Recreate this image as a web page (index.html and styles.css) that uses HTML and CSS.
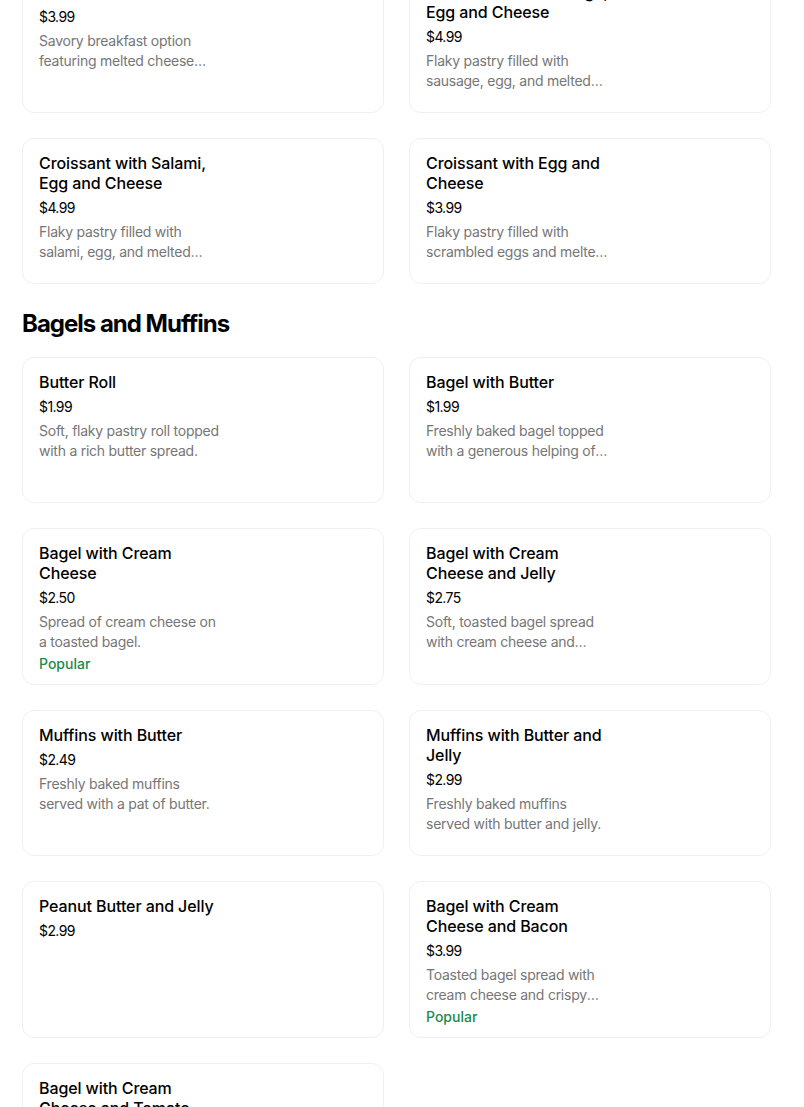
FILE: index.html
```html
<!DOCTYPE html>
<html lang="en">
<head>
<meta charset="utf-8">
<title>Menu</title>
<link rel="stylesheet" href="styles.css">
</head>
<body>
<main class="menu">
  <section class="section">
    <div class="grid">
      <article class="card">
        <div class="info">
          <h3 class="title">Cheese Croissant</h3>
          <div class="price">$3.99</div>
          <p class="desc">Savory breakfast option featuring melted cheese inside a buttery croissant.</p>
        </div>
      </article>
      <article class="card">
        <div class="info">
          <h3 class="title">Croissant with Sausage, Egg and Cheese</h3>
          <div class="price">$4.99</div>
          <p class="desc">Flaky pastry filled with sausage, egg, and melted cheese.</p>
        </div>
      </article>
      <article class="card">
        <div class="info">
          <h3 class="title">Croissant with Salami, Egg and Cheese</h3>
          <div class="price">$4.99</div>
          <p class="desc">Flaky pastry filled with salami, egg, and melted cheese.</p>
        </div>
      </article>
      <article class="card">
        <div class="info">
          <h3 class="title">Croissant with Egg and Cheese</h3>
          <div class="price">$3.99</div>
          <p class="desc">Flaky pastry filled with scrambled eggs and melted cheese.</p>
        </div>
      </article>
    </div>
  </section>

  <section class="section">
    <h2 class="section-title">Bagels and Muffins</h2>
    <div class="grid">
      <article class="card">
        <div class="info">
          <h3 class="title">Butter Roll</h3>
          <div class="price">$1.99</div>
          <p class="desc">Soft, flaky pastry roll topped with a rich butter spread.</p>
        </div>
      </article>
      <article class="card">
        <div class="info">
          <h3 class="title">Bagel with Butter</h3>
          <div class="price">$1.99</div>
          <p class="desc">Freshly baked bagel topped with a generous helping of butter.</p>
        </div>
      </article>
      <article class="card">
        <div class="info">
          <h3 class="title">Bagel with Cream Cheese</h3>
          <div class="price">$2.50</div>
          <p class="desc">Spread of cream cheese on a toasted bagel.</p>
          <div class="badge">Popular</div>
        </div>
      </article>
      <article class="card">
        <div class="info">
          <h3 class="title">Bagel with Cream Cheese and Jelly</h3>
          <div class="price">$2.75</div>
          <p class="desc">Soft, toasted bagel spread with cream cheese and sweet jelly.</p>
        </div>
      </article>
      <article class="card">
        <div class="info">
          <h3 class="title">Muffins with Butter</h3>
          <div class="price">$2.49</div>
          <p class="desc">Freshly baked muffins served with a pat of butter.</p>
        </div>
      </article>
      <article class="card">
        <div class="info">
          <h3 class="title">Muffins with Butter and Jelly</h3>
          <div class="price">$2.99</div>
          <p class="desc">Freshly baked muffins served with butter and jelly.</p>
        </div>
      </article>
      <article class="card">
        <div class="info">
          <h3 class="title">Peanut Butter and Jelly</h3>
          <div class="price">$2.99</div>
        </div>
      </article>
      <article class="card">
        <div class="info">
          <h3 class="title">Bagel with Cream Cheese and Bacon</h3>
          <div class="price">$3.99</div>
          <p class="desc">Toasted bagel spread with cream cheese and crispy bacon.</p>
          <div class="badge">Popular</div>
        </div>
      </article>
      <article class="card">
        <div class="info">
          <h3 class="title">Bagel with Cream Cheese and Tomato</h3>
          <div class="price">$3.49</div>
          <p class="desc">Toasted bagel spread with cream cheese and fresh tomato slices.</p>
        </div>
      </article>
    </div>
  </section>
</main>
</body>
</html>
```

FILE: styles.css
```css
* {
  box-sizing: border-box;
}

html, body {
  margin: 0;
  padding: 0;
  background: #ffffff;
}

body {
  font-family: "Inter", "Roboto", "Liberation Sans", sans-serif;
  color: #000000;
  overflow: hidden;
}

.menu {
  width: 749px;
  margin: -33px 0 0 22px;
}

.section-title {
  margin: 24px 0 17px;
  font-size: 24px;
  line-height: 32px;
  font-weight: 700;
  letter-spacing: -1px;
}

.grid {
  display: grid;
  grid-template-columns: 362px 362px;
  column-gap: 25px;
  row-gap: 25px;
}

.card {
  display: flex;
  min-height: 146px;
  padding: 14px 16px 11px;
  border: 1px solid #f0f0f0;
  border-radius: 12px;
  background: #ffffff;
}

.info {
  width: 186px;
  display: flex;
  flex-direction: column;
}

.title {
  margin: 0;
  font-size: 16px;
  line-height: 20px;
  font-weight: 500;
  letter-spacing: -0.1px;
  color: #000000;
}

.price {
  margin-top: 5px;
  font-size: 14px;
  line-height: 20px;
  letter-spacing: -0.6px;
  color: #000000;
}

.desc {
  margin: 4px 0 0;
  font-size: 14px;
  line-height: 20px;
  letter-spacing: -0.25px;
  color: #767676;
  display: -webkit-box;
  -webkit-line-clamp: 2;
  -webkit-box-orient: vertical;
  overflow: hidden;
}

.badge {
  margin-top: 3px;
  font-size: 14px;
  line-height: 18px;
  font-weight: 500;
  color: #1a8a4c;
}
```
